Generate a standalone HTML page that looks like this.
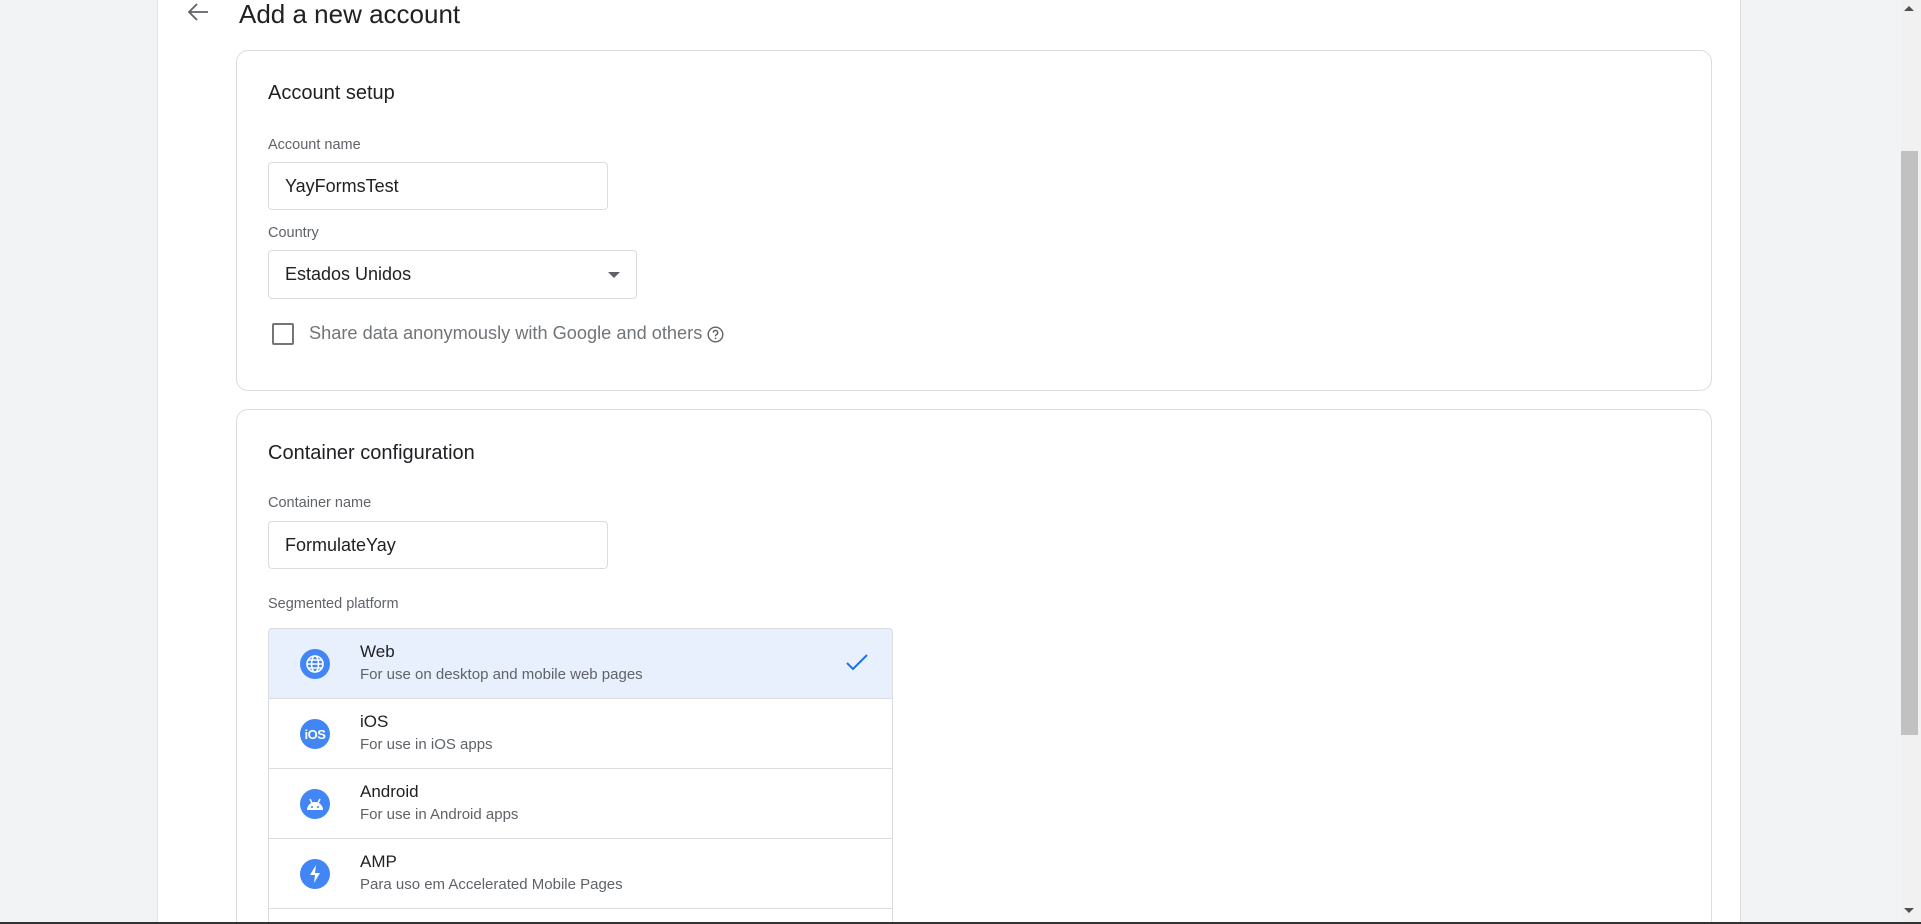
<!DOCTYPE html>
<html style="width:1921px;height:924px;overflow:hidden"><head><meta charset="utf-8"><style>
*{box-sizing:border-box;margin:0;padding:0}
body{width:1921px;height:924px;overflow:hidden;background:#f1f3f4;font-family:"Liberation Sans",sans-serif;position:relative;color:#202124}
.abs{position:absolute}
.main{left:157px;top:0;width:1584px;height:924px;background:#fff;border-left:1px solid #e3e3e3;border-right:1px solid #dadce0}
.card{left:236px;width:1476px;border:1px solid #dadce0;border-radius:12px;background:#fff}
.h{font-size:20px;color:#202124}
.lbl{font-size:14.5px;color:#5f6368}
.inp{border:1px solid #dadce0;border-radius:4px;background:#fff;font-size:18px;padding-left:16px;display:flex;align-items:center;color:#202124}
.row{left:268px;width:625px;height:70px;border:1px solid #dadce0;border-top:none}
.ic{position:absolute;left:31px;top:20px;width:30px;height:30px;border-radius:50%;background:#4285f4;display:flex;align-items:center;justify-content:center}
.t{position:absolute;left:91px;top:13px;font-size:17px;color:#202124}
.s{position:absolute;left:91px;top:37px;font-size:15px;color:#5f6368}
</style></head><body>
<div class="abs main"></div>
<svg class="abs" style="left:186px;top:2px" width="24" height="20" viewBox="0 0 24 20"><path d="M22 10H4M11 2L3 10l8 8" fill="none" stroke="#5f6368" stroke-width="1.8"/></svg>
<div class="abs" style="left:239px;top:-1px;font-size:26px;color:#202124">Add a new account</div>

<div class="abs card" style="top:50px;height:341px"></div>
<div class="abs h" style="left:268px;top:82px">Account setup</div>
<div class="abs lbl" style="left:268px;top:137px">Account name</div>
<div class="abs inp" style="left:268px;top:162px;width:340px;height:48px">YayFormsTest</div>
<div class="abs lbl" style="left:268px;top:225px">Country</div>
<div class="abs inp" style="left:268px;top:250px;width:369px;height:49px">Estados Unidos
<svg style="position:absolute;right:16px;top:21px" width="12" height="7"><path d="M0 0h12L6 6z" fill="#5f6368"/></svg></div>
<div class="abs" style="left:272px;top:323px;width:22px;height:22px;border:2px solid #757575;border-radius:2px"></div>
<div class="abs" style="left:309px;top:323px;font-size:18.2px;color:#70757a">Share data anonymously with Google and others</div>
<svg class="abs" style="left:707px;top:326px" width="17" height="17" viewBox="0 0 17 17"><circle cx="8.5" cy="8.5" r="7.3" fill="none" stroke="#5f6368" stroke-width="1.4"/><path d="M6.3 6.6a2.2 2.2 0 1 1 3.2 2c-.8.4-1 .8-1 1.6" fill="none" stroke="#5f6368" stroke-width="1.4"/><circle cx="8.5" cy="12.4" r=".9" fill="#5f6368"/></svg>

<div class="abs card" style="top:409px;height:515px;border-bottom:none;border-radius:12px 12px 0 0"></div>
<div class="abs h" style="left:268px;top:442px">Container configuration</div>
<div class="abs lbl" style="left:268px;top:495px">Container name</div>
<div class="abs inp" style="left:268px;top:521px;width:340px;height:48px">FormulateYay</div>
<div class="abs lbl" style="left:268px;top:596px">Segmented platform</div>

<div class="abs row" style="top:628px;border-top:1px solid #dadce0;border-radius:4px 4px 0 0;background:#e8f0fe;height:71px">
<div class="ic"><svg width="20" height="20" viewBox="0 0 20 20" fill="none" stroke="#fff" stroke-width="1.6"><circle cx="10" cy="10" r="8"/><ellipse cx="10" cy="10" rx="3.5" ry="8"/><path d="M2 10h16M3.3 6h13.4M3.3 14h13.4"/></svg></div>
<div class="t">Web</div><div class="s">For use on desktop and mobile web pages</div>
<svg style="position:absolute;left:576px;top:24px" width="24" height="20"><path d="M2 10l6 6L22 2" fill="none" stroke="#1a73e8" stroke-width="2"/></svg></div>
<div class="abs row" style="top:699px">
<div class="ic"><span style="color:#fff;font-weight:bold;font-size:13px;letter-spacing:-0.5px">iOS</span></div>
<div class="t">iOS</div><div class="s">For use in iOS apps</div></div>
<div class="abs row" style="top:769px">
<div class="ic"><svg width="20" height="14" viewBox="0 0 20 14"><path d="M2 13a8 8 0 0 1 16 0z" fill="#fff"/><path d="M5 2l2 4M15 2l-2 4" stroke="#fff" stroke-width="1.5"/><circle cx="7" cy="10" r="1" fill="#4285f4"/><circle cx="13" cy="10" r="1" fill="#4285f4"/></svg></div>
<div class="t">Android</div><div class="s">For use in Android apps</div></div>
<div class="abs row" style="top:839px">
<div class="ic"><svg width="14" height="20" viewBox="0 0 14 20"><path d="M8 1L2 11h5l-1 8 6-10H7z" fill="#fff"/></svg></div>
<div class="t">AMP</div><div class="s">Para uso em Accelerated Mobile Pages</div></div>
<div class="abs row" style="top:909px;height:15px;border-bottom:none"></div>

<div class="abs" style="left:1901px;top:0;width:20px;height:924px;background:#f1f1f1"></div>
<div class="abs" style="left:1901px;top:151px;width:17px;height:584px;background:#c1c1c1"></div>
<svg class="abs" style="left:1904px;top:6px" width="10" height="6"><path d="M0 5h10L5 0z" fill="#505050"/></svg>
<svg class="abs" style="left:1904px;top:908px" width="10" height="6"><path d="M0 0h10L5 5z" fill="#505050"/></svg>
<div class="abs" style="left:0;top:922px;width:1921px;height:2px;background:#333"></div>
</body></html>
